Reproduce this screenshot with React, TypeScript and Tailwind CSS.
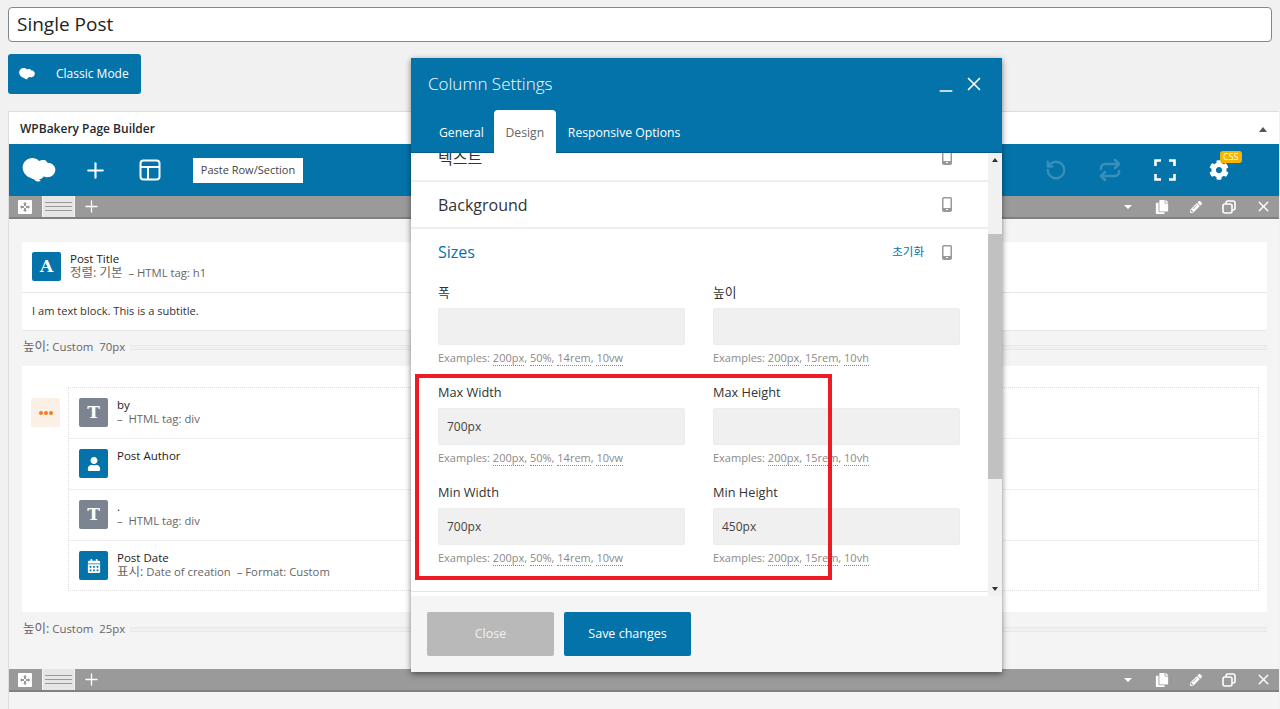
import { Plus, RotateCcw, Repeat, X, Minus } from "lucide-react"
import { FaCog, FaCopy, FaPencilAlt, FaUser, FaCalendarAlt } from "react-icons/fa"

const font = { fontFamily: '"Open Sans", "Noto Sans CJK KR", sans-serif' }

function Cloud({ className }: { className?: string }) {
  return (
    <svg viewBox="0 0 34 26" className={className} fill="currentColor">
      <path d="M10 0c3 0 5 1 7 3 2-1 4-1 6-1 2 1 2 2 3 3 4 0 8 3 8 7 0 5-4 8-8 8-2 0-3 0-4-1-1 2-3 3-5 3l2 2c-3 1-6 0-7-2-1 0-2 0-3-1C4 20 0 15 0 10 0 4 5 0 10 0z" />
    </svg>
  )
}

function MoveIcon() {
  return (
    <svg viewBox="0 0 14 14" className="h-[14px] w-[14px]">
      <rect width="14" height="14" rx="1" fill="#fff" />
      <path d="M7 2l2 2H8v2H6V4H5zM7 12l2-2H8V8H6v2H5zM2 7l2-2v1h2v2H4v1zM12 7l-2-2v1H8v2h2v1z" fill="#9a9a9a" />
    </svg>
  )
}

function Phone() {
  return (
    <svg viewBox="0 0 10 15" className="h-[15px] w-[10px]">
      <rect x="0.75" y="0.75" width="8.5" height="13.5" rx="1" fill="#fff" stroke="#999" strokeWidth="1.5" />
      <rect x="1" y="11" width="8" height="3" fill="#999" />
      <rect x="4" y="12" width="2" height="1" fill="#fff" />
    </svg>
  )
}

function RowBar({ className }: { className?: string }) {
  return (
    <div className={`flex h-[23px] items-center border-b-2 border-[#808080] bg-[#9a9a9a] ${className ?? ""}`}>
      <div className="flex w-[33px] justify-center pr-[2px]">
        <MoveIcon />
      </div>
      <div className="flex h-full w-[33px] flex-col justify-center gap-[3px] border-x border-[#f4f4f4] bg-[#e6e6e6] px-[2px]">
        <div className="h-[1px] bg-[#999]" />
        <div className="h-[1px] bg-[#999]" />
        <div className="h-[1px] bg-[#999]" />
      </div>
      <Plus size={19} strokeWidth={1.6} className="ml-[7px] text-white" />
      <div className="ml-auto flex items-center pr-[7px] text-white">
        <div className="mr-[23px] h-0 w-0 border-x-[4px] border-t-[4px] border-x-transparent border-t-white" />
        <FaCopy size={14} className="mr-[21px]" />
        <FaPencilAlt size={12} className="mr-[20px]" />
        <svg viewBox="0 0 14 14" className="mr-[19px] h-[14px] w-[14px]" fill="none" stroke="#fff" strokeWidth="1.6">
          <rect x="1" y="4" width="9" height="9" rx="2" />
          <path d="M4 3.5V3a2 2 0 012-2h5a2 2 0 012 2v5a2 2 0 01-2 2h-.5" />
        </svg>
        <X size={17} strokeWidth={2} />
      </div>
    </div>
  )
}

function SizeLabel({ value }: { value: string }) {
  return (
    <div className="flex h-[17px] items-center gap-[5px] text-[11.4px] text-[#666]">
      <span className="whitespace-nowrap pl-[1px]">
        <span className="text-[12.5px]">높이:</span> Custom {"\u00a0"}
        {value}
      </span>
      <div className="h-[5px] flex-1 border-y border-[#e8e8e8] bg-[#f0f0f0]" />
    </div>
  )
}

function Badge({ bg, children }: { bg: string; children: React.ReactNode }) {
  return <div className={`flex h-[29px] w-[29px] shrink-0 items-center justify-center rounded-[2px] text-white ${bg}`}>{children}</div>
}

function Letter({ ch }: { ch: string }) {
  return <span className="text-[17px] font-bold leading-none" style={{ fontFamily: '"DejaVu Serif", serif' }}>{ch}</span>
}

function Element({ icon, bg, title, sub, border }: { icon: React.ReactNode; bg: string; title: string; sub?: React.ReactNode; border?: boolean }) {
  return (
    <div className={`flex h-[51px] gap-[9px] pl-[10px] pt-[10px] ${border ? "border-b border-[#eee]" : ""}`}>
      <Badge bg={bg}>{icon}</Badge>
      <div className="text-[11.5px] leading-[13.5px]">
        <div className="text-[#222]">{title}</div>
        {sub && <div className="text-[11.3px] text-[#666]">{sub}</div>}
      </div>
    </div>
  )
}

function Field({ label, value, hint }: { label: string; value?: string; hint: string[] }) {
  return (
    <div className="w-[247px]">
      <div className="h-[24px] text-[12.75px] leading-[17px] text-[#333]">{label}</div>
      <div className="flex h-[37px] items-center rounded-[2px] border border-[#ececec] bg-[#f0f0f0] pl-[8px] text-[12px] text-[#444]">{value}</div>
      <div className="mt-[6px] text-[11px] leading-[14px] text-[#8a8a8a]">
        Examples:{" "}
        {hint.map((h, i) => (
          <span key={h}>
            <span className="border-b border-dotted border-[#888]">{h}</span>
            {i < hint.length - 1 ? ", " : ""}
          </span>
        ))}
      </div>
    </div>
  )
}

function ParamRow({ label }: { label: string }) {
  return (
    <div className="flex h-[47px] items-center border-b-2 border-[#eee] pl-[27px] pr-[36px]">
      <span className="text-[16px] text-[#333]">{label}</span>
      <div className="ml-auto">
        <Phone />
      </div>
    </div>
  )
}

function Modal() {
  return (
    <div className="absolute left-[411px] top-[58px] flex h-[614px] w-[591px] flex-col bg-white shadow-[0_2px_6px_rgba(0,0,0,0.5)]">
      <div className="h-[95px] border-b border-[#035d8a] bg-[#0473aa]">
        <div className="flex h-[52px] items-center pl-[17px] pr-[17px] text-white">
          <span className="text-[17px] font-light leading-[24px]">Column Settings</span>
          <Minus size={20} strokeWidth={1.8} className="ml-auto mr-[7px] mt-[14px]" />
          <X size={22} strokeWidth={1.8} />
        </div>
        <div className="flex pl-[16px] text-[12.2px] font-medium text-white">
          <span className="mt-[14px] pl-[12px] pr-[10px]">General</span>
          <span className="h-[43px] w-[62px] rounded-t-[4px] bg-white pt-[14px] text-center font-normal text-[#666]">Design</span>
          <span className="mt-[14px] px-[12px]">Responsive Options</span>
        </div>
      </div>
      <div className="flex h-[443px] overflow-hidden">
        <div className="flex-1 overflow-hidden">
          <div className="-mt-[18px]">
            <ParamRow label="텍스트" />
            <ParamRow label="Background" />
            <div className="flex h-[46px] items-center pl-[27px] pr-[36px]">
              <span className="text-[16px] font-medium text-[#0473aa]">Sizes</span>
              <span className="ml-auto mr-[18px] text-[11.5px] text-[#0473aa]">초기화</span>
              <Phone />
            </div>
            <div className="grid grid-cols-[247px_247px] gap-x-[28px] gap-y-[19px] pl-[27px] pt-[9px]">
              <Field label="폭" hint={["200px", "50%", "14rem", "10vw"]} />
              <Field label="높이" hint={["200px", "15rem", "10vh"]} />
              <Field label="Max Width" value="700px" hint={["200px", "50%", "14rem", "10vw"]} />
              <Field label="Max Height" hint={["200px", "15rem", "10vh"]} />
              <Field label="Min Width" value="700px" hint={["200px", "50%", "14rem", "10vw"]} />
              <Field label="Min Height" value="450px" hint={["200px", "15rem", "10vh"]} />
            </div>
            <div className="mt-[26px] border-b border-[#e5e5e5]" />
          </div>
        </div>
        <div className="flex w-[14px] flex-col bg-[#f1f1f1]">
          <div className="flex h-[14px] items-center justify-center">
            <div className="h-0 w-0 border-x-[3.5px] border-b-[4px] border-x-transparent border-b-[#333]" />
          </div>
          <div className="mt-[67px] h-[245px] bg-[#c1c1c1]" />
          <div className="mt-auto flex h-[14px] items-center justify-center">
            <div className="h-0 w-0 border-x-[3.5px] border-t-[4px] border-x-transparent border-t-[#333]" />
          </div>
        </div>
      </div>
      <div className="flex flex-1 gap-[10px] bg-[#f5f5f5] pl-[16px] pt-[16px]">
        <button className="h-[44px] w-[127px] rounded-[2px] bg-[#b9b9b9] text-[12.5px] text-[#f0f0f0]">Close</button>
        <button className="h-[44px] w-[127px] rounded-[2px] bg-[#0473aa] text-[12.5px] text-white">Save changes</button>
      </div>
    </div>
  )
}

export default function App() {
  return (
    <div className="relative h-[709px] overflow-hidden bg-[#f1f1f1] text-[#23282d]" style={font}>
      <div className="px-[8px] pt-[7px]">
        <div className="flex h-[35px] items-center rounded-[4px] border border-[#7e8993] bg-white pl-[8px] text-[19px] leading-none text-[#222]">Single Post</div>
        <button className="mt-[12px] flex h-[40px] w-[133px] items-center rounded-[3px] bg-[#0473aa] pl-[11px] text-[12px] font-medium text-white">
          <Cloud className="h-[12px] w-[16px]" />
          <span className="ml-[21px]">Classic Mode</span>
        </button>
      </div>

      <div className="ml-[8px] mr-[1px] mt-[17px] border-l border-t border-[#ddd]">
        <div className="flex h-[32px] items-center bg-white pl-[11px] pr-[12px] pt-[2px] text-[12px] font-semibold text-[#23282d]">
          WPBakery Page Builder
          <div className="ml-auto h-0 w-0 border-x-[4px] border-b-[5px] border-x-transparent border-b-[#555]" />
        </div>

        <div className="flex h-[52px] items-center bg-[#0473aa] text-white">
          <Cloud className="ml-[13px] h-[25px] w-[34px]" />
          <Plus size={25} strokeWidth={2} className="ml-[27px]" />
          <svg viewBox="0 0 22 22" className="ml-[31px] h-[22px] w-[22px]" fill="none" stroke="#fff" strokeWidth="2">
            <rect x="1.5" y="1.5" width="19" height="19" rx="3" />
            <path d="M1.5 8h19M9 8v12.5" />
          </svg>
          <div className="ml-[32px] flex h-[25px] w-[110px] items-center justify-center bg-white text-[11px] text-[#444]">Paste Row/Section</div>
          <div className="ml-auto flex items-center pr-[50px]">
            <RotateCcw size={22} strokeWidth={2.5} className="text-[#3a8fba]" />
            <Repeat size={24} strokeWidth={2.5} className="ml-[31px] text-[#3a8fba]" />
            <svg viewBox="0 0 22 22" className="ml-[32px] h-[22px] w-[22px]" fill="none" stroke="#fff" strokeWidth="2.6">
              <path d="M1.5 7V1.5H7M15 1.5h5.5V7M20.5 15v5.5H15M7 20.5H1.5V15" />
            </svg>
            <div className="relative ml-[33px]">
              <FaCog size={20} />
              <span className="absolute left-[11px] top-[-9px] rounded-[3px] bg-[#f7b500] px-[3px] text-[9px] leading-[12px] text-white">CSS</span>
            </div>
          </div>
        </div>

        <RowBar />

        <div className="h-[450px] bg-[#f4f4f4] pl-[13px] pr-[12px] pt-[23px]">
          <div className="bg-white">
            <div className="flex h-[51px] gap-[9px] border-b border-[#e8e8e8] pl-[10px] pt-[10px]">
              <Badge bg="bg-[#0473aa]">
                <Letter ch="A" />
              </Badge>
              <div className="text-[11.5px] leading-[13.5px]">
                <div className="text-[#222]">Post Title</div>
                <div className="text-[11.3px] text-[#666]">
                  <span className="text-[12.5px]">정렬: 기본</span> &nbsp;– HTML tag: h1
                </div>
              </div>
            </div>
            <div className="flex h-[38px] items-center border-b border-[#e8e8e8] pl-[10px] text-[11.1px] text-[#333]">I am text block. This is a subtitle.</div>
          </div>
          <div className="mt-[8px]">
            <SizeLabel value="70px" />
          </div>
          <div className="mt-[10px] flex h-[246px] bg-white pl-[9px] pt-[21px]">
            <div className="mt-[11px] flex h-[29px] w-[29px] items-center justify-center gap-[1px] rounded-[2px] bg-[#fbf0e6]">
              <div className="h-[4px] w-[4px] rounded-full bg-[#f57c20]" />
              <div className="h-[4px] w-[4px] rounded-full bg-[#f57c20]" />
              <div className="h-[4px] w-[4px] rounded-full bg-[#f57c20]" />
            </div>
            <div className="ml-[8px] mr-[8px] h-[204px] flex-1 border border-dotted border-[#ddd]">
              <Element border bg="bg-[#7b8490]" icon={<Letter ch="T" />} title="by" sub={"– \u00a0HTML tag: div"} />
              <Element border bg="bg-[#0473aa]" icon={<FaUser size={14} />} title="Post Author" />
              <Element border bg="bg-[#7b8490]" icon={<Letter ch="T" />} title="." sub={"– \u00a0HTML tag: div"} />
              <Element
                bg="bg-[#0473aa]"
                icon={<FaCalendarAlt size={14} />}
                title="Post Date"
                sub={
                  <>
                    <span className="text-[12.5px]">표시:</span> Date of creation {"\u00a0"}– Format: Custom
                  </>
                }
              />
            </div>
          </div>
          <div className="mt-[9px]">
            <SizeLabel value="25px" />
          </div>
        </div>

        <RowBar />
        <div className="h-[20px] bg-[#f4f4f4]" />
      </div>

      <Modal />
      <div className="pointer-events-none absolute left-[415px] top-[374px] h-[206px] w-[417px] border-[4px] border-[#ed1c24]" />
    </div>
  )
}
